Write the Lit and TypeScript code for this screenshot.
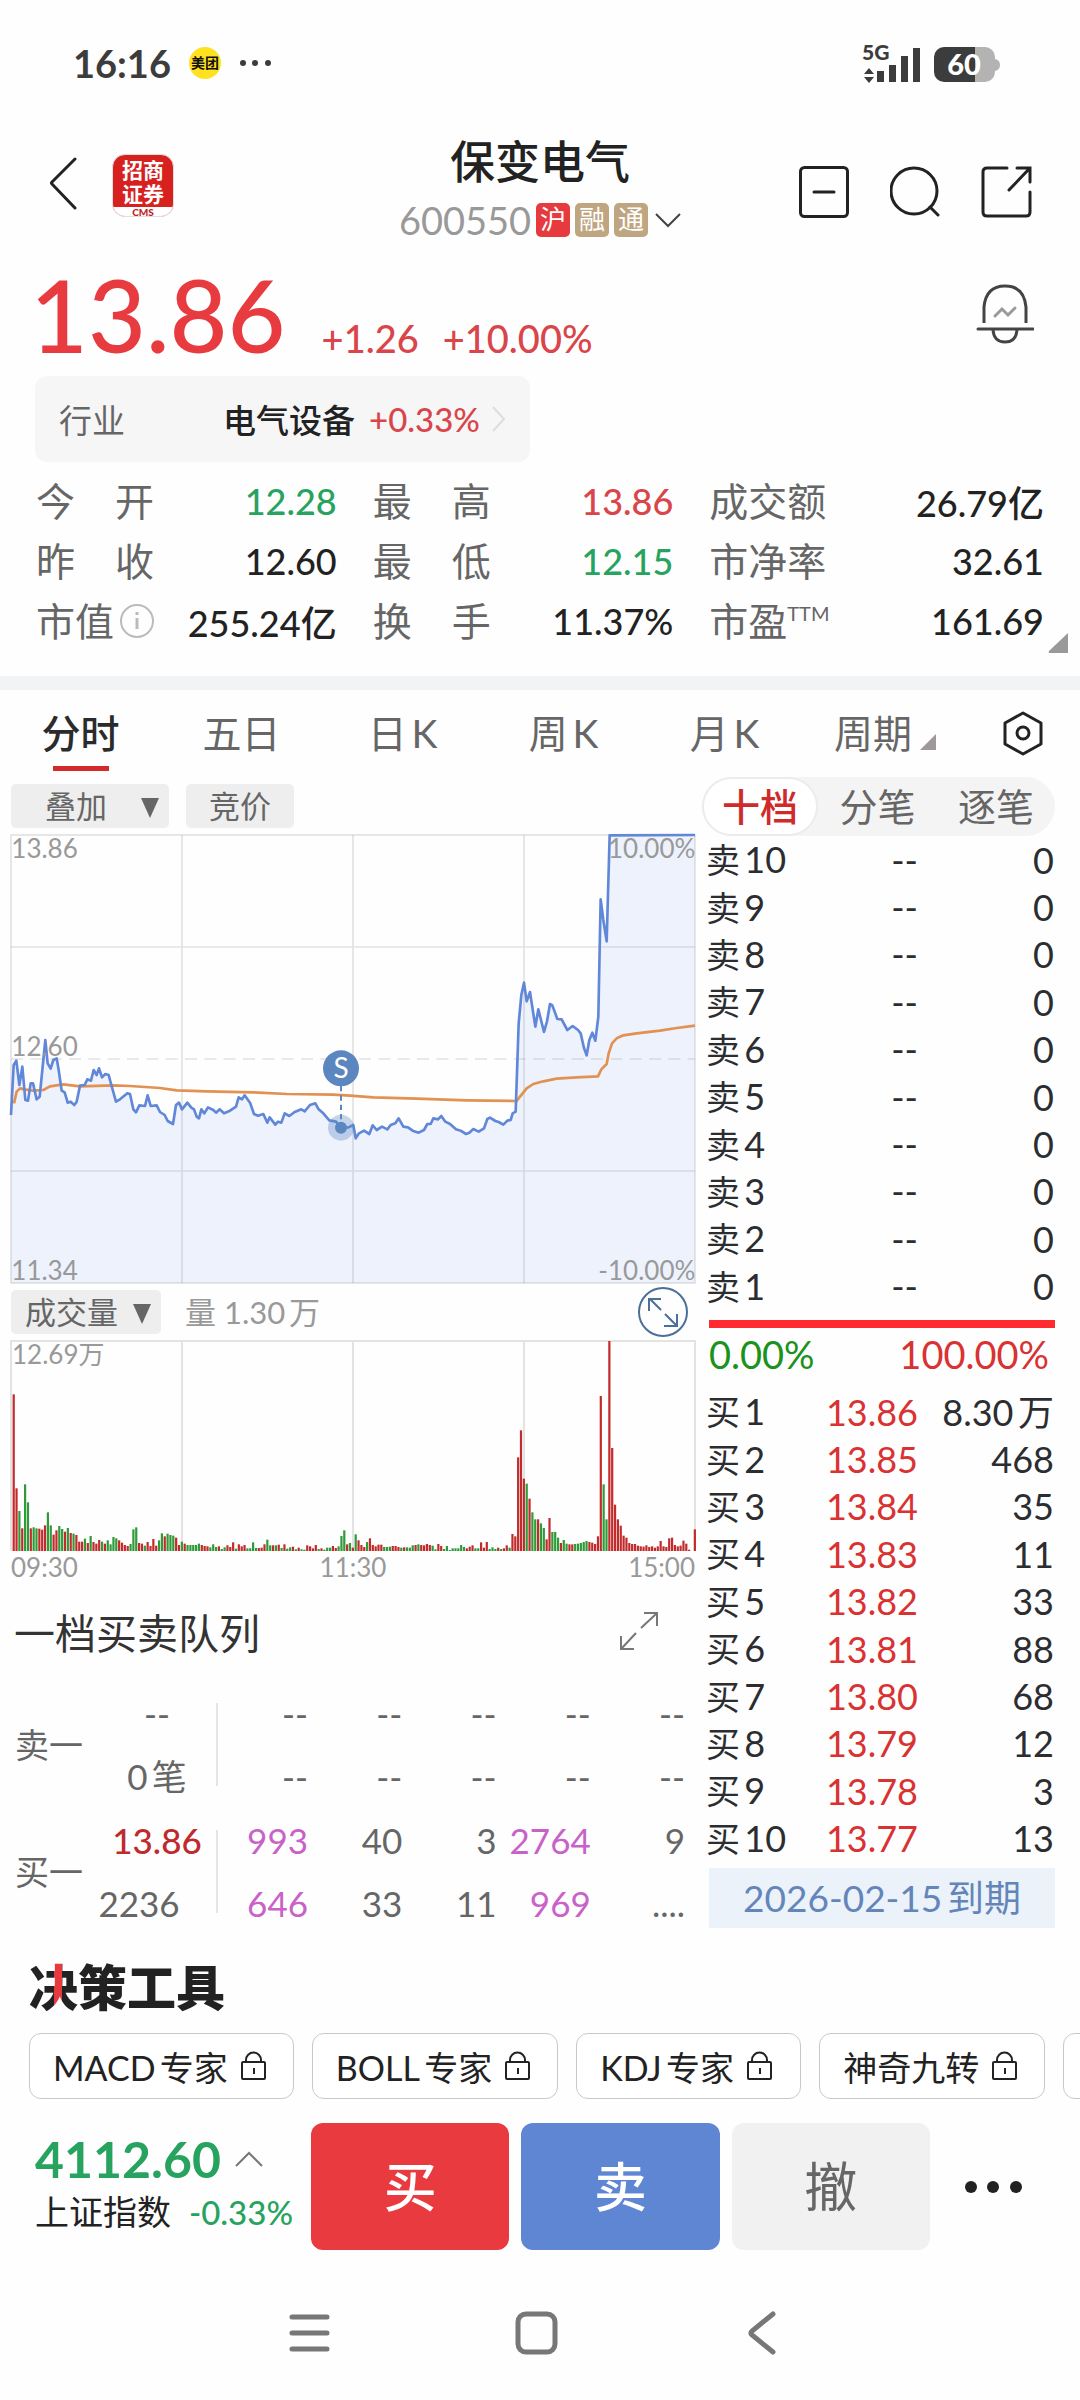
import { LitElement, html, svg, css } from "lit";
import { customElement } from "lit/decorators.js";
import { classMap } from "lit/directives/class-map.js";

const base = css`
  :host {
    display: block;
    font-family: Lato, "Noto Sans CJK SC", sans-serif;
    text-autospace: normal;
  }
  * {
    box-sizing: border-box;
  }
  button {
    border: 0;
    padding: 0;
    margin: 0;
    background: none;
    font: inherit;
    color: inherit;
    cursor: pointer;
  }
  svg {
    display: block;
  }
  table {
    width: 100%;
    border-collapse: collapse;
  }
  td,
  th {
    padding: 0;
    font-weight: 400;
  }
`;

const PRICE: number[] = [
  33, 885, 41, 735, 49, 722, 58, 795, 67, 740, 76, 840, 84, 842, 92, 790, 99, 790, 110, 838, 119, 830, 136, 660, 143, 730,
  152, 746, 160, 720, 170, 715, 176, 750, 185, 812, 194, 817, 203, 848, 212, 845, 223, 855, 230, 845, 240, 797, 254, 795,
  262, 778, 273, 782, 281, 750, 290, 765, 297, 745, 306, 772, 316, 762, 326, 765, 334, 795, 348, 845, 360, 838, 382, 820,
  390, 822, 400, 868, 408, 877, 418, 856, 435, 858, 443, 826, 452, 858, 470, 856, 480, 876, 494, 885, 503, 903, 519, 912,
  528, 855, 537, 848, 546, 868, 562, 848, 574, 863, 582, 868, 590, 890, 597, 895, 604, 868, 613, 880, 624, 862, 640, 870,
  648, 878, 659, 868, 672, 880, 690, 872, 708, 860, 716, 832, 726, 838, 734, 826, 750, 848, 762, 882, 774, 887, 790, 882,
  802, 908, 809, 892, 826, 914, 834, 905, 844, 908, 854, 880, 868, 888, 884, 876, 904, 868, 914, 874, 930, 855, 946, 850,
  956, 868, 968, 878, 988, 901, 1008, 905, 1023, 923, 1045, 922, 1060, 915, 1067, 955, 1077, 940, 1092, 932, 1108, 942,
  1118, 916, 1130, 930, 1146, 920, 1162, 928, 1172, 915, 1186, 910, 1196, 895, 1210, 920, 1224, 922, 1238, 932, 1256, 938,
  1272, 930, 1282, 912, 1292, 912, 1300, 895, 1314, 898, 1324, 888, 1336, 905, 1350, 912, 1368, 928, 1382, 932, 1398, 942,
  1408, 938, 1420, 927, 1436, 935, 1452, 925, 1462, 897, 1470, 893, 1486, 903, 1496, 906, 1510, 914, 1522, 902, 1532, 900,
  1538, 880, 1547, 875, 1556, 610, 1564, 525, 1572, 488, 1580, 544, 1590, 516, 1606, 620, 1615, 568, 1632, 636, 1641, 604,
  1650, 552, 1657, 556, 1672, 597, 1685, 598, 1702, 630, 1718, 618, 1734, 630, 1742, 640, 1752, 684, 1760, 706, 1768, 660,
  1777, 638, 1786, 662, 1795, 590, 1802, 238, 1810, 300, 1820, 364, 1829, 46, 2085, 45,
];

const AVERAGE: number[] = [
  42, 850, 50, 815, 60, 805, 72, 808, 100, 812, 130, 810, 150, 799, 190, 793, 240, 799, 340, 796, 390, 798, 480, 804, 530,
  811, 620, 814, 760, 817, 860, 822, 1000, 824, 1050, 827, 1120, 832, 1250, 836, 1400, 841, 1550, 843, 1560, 830, 1580, 805,
  1600, 792, 1630, 784, 1670, 776, 1730, 772, 1794, 769, 1804, 748, 1820, 732, 1826, 700, 1836, 670, 1850, 655, 1870, 646,
  1910, 640, 1980, 632, 2030, 624, 2085, 617,
];

/* Minute volumes: positive for a rising minute, negative for a falling one; the peak is 630. */
const VOLUME: number[] = [
  470, 188, -120, 68, -200, -146, 68, -71, -68, 67, 64, 77, -116, -77, 49, 62, -75, -66, 58, -69, 54, -52, 48, 28, 28, -37,
  24, -45, 27, 22, 33, -28, 22, -32, -20, -42, -38, 32, 25, 18, 15, -21, -65, -71, 24, 22, -16, 27, 15, 36, 16, -32, -53,
  44, -52, -48, -46, 40, 18, -28, 22, -18, -18, -18, -18, -22, 18, 15, 14, -11, -20, -12, 14, -6, -11, 17, 12, 26, -7, 20,
  14, 18, -8, -8, -26, -9, 9, 10, 20, -34, -17, 17, -17, 19, -9, 20, -7, -11, 13, -5, 10, -5, -4, 17, 14, 8, 18, -6, 8, -4,
  -10, -10, 15, 9, -14, -45, -62, 20, -24, 10, -50, 32, 18, 12, -27, 38, 18, 14, 19, 19, -12, -12, -13, 15, 15, 12, -10,
  11, -11, -10, -17, 18, -20, 18, 17, 21, 18, -16, -5, 21, 15, -6, -15, -3, -8, -8, -8, -18, -12, 8, 13, 17, -8, -8, 26,
  10, 27, -6, -11, -6, 10, -6, 8, 17, -10, 51, 44, 281, 362, 217, -202, 157, -116, -95, 95, -83, -69, 35, 99, -57, -57,
  -40, 24, -33, -22, 20, 20, -21, -22, -24, -27, -30, 27, 25, 21, 44, 465, -200, -95, 630, 309, 139, 95, 76, 46, 40, 24,
  21, 21, 16, 14, 13, 17, 12, 14, 10, 14, 30, 14, 12, 38, 40, 18, 14, 16, 31, 22, 4, 0, 65,
];

@customElement("price-chart")
class PriceChart extends LitElement {
  static styles = [
    base,
    css`
      svg {
        width: 100%;
        height: auto;
        overflow: visible;
      }
      .grid {
        fill: none;
        stroke: #8c8c8c;
        stroke-opacity: 0.24;
        stroke-width: 5;
      }
      .area {
        fill: #edf2fd;
      }
      .price {
        fill: none;
        stroke: #6188d8;
        stroke-width: 8;
        stroke-linejoin: round;
      }
      .average {
        fill: none;
        stroke: #e29150;
        stroke-width: 8;
        stroke-linejoin: round;
      }
      .label {
        font-size: 78px;
        fill: #999;
      }
      .end {
        text-anchor: end;
      }
      .badge {
        fill: #5c86c0;
      }
      .halo {
        fill: #5c86c0;
        opacity: 0.35;
      }
      .stem {
        stroke: #5c86c0;
        stroke-width: 6;
        stroke-dasharray: 16 12;
      }
      .mark {
        font-size: 84px;
        fill: #fff;
        text-anchor: middle;
      }
    `,
  ];

  render() {
    const line = PRICE.join(" ");
    return html`
      <svg viewBox="33 45 2052 1344" role="img" aria-label="分时走势">
        <polygon class="area" points="33 1389 ${line} 2085 1389"></polygon>
        <rect class="grid" x="33" y="45" width="2052" height="1344"></rect>
        <path class="grid" d="M33 381H2085M33 1053H2085M546 45V1389M1059 45V1389M1572 45V1389"></path>
        <path class="grid" stroke-dasharray="36 22" d="M33 717H2085"></path>
        <polyline class="average" points=${AVERAGE.join(" ")}></polyline>
        <polyline class="price" points=${line}></polyline>
        <text class="label" x="34" y="114">13.86</text>
        <text class="label" x="34" y="708">12.60</text>
        <text class="label" x="34" y="1380">11.34</text>
        <text class="label end" x="2086" y="114">10.00%</text>
        <text class="label end" x="2086" y="1380">-10.00%</text>
        <circle class="halo" cx="1023" cy="923" r="39"></circle>
        <circle class="badge" cx="1023" cy="923" r="18"></circle>
        <path class="stem" d="M1023 798V905"></path>
        <circle class="badge" cx="1023" cy="745" r="54"></circle>
        <text class="mark" x="1023" y="775">S</text>
      </svg>
    `;
  }
}

@customElement("volume-chart")
class VolumeChart extends LitElement {
  static styles = [
    base,
    css`
      svg {
        width: 100%;
        height: auto;
        overflow: visible;
      }
      .grid {
        fill: none;
        stroke: #e3e3e3;
        stroke-width: 2;
      }
      .up {
        fill: #c22b2b;
      }
      .down {
        fill: #2f9a38;
      }
      .label {
        font-size: 26px;
        fill: #999;
        text-autospace: no-autospace;
      }
      .times {
        display: flex;
        justify-content: space-between;
        height: 32px;
        line-height: 32px;
        font-size: 26px;
        color: #999;
      }
    `,
  ];

  render() {
    return html`
      <svg viewBox="0 0 684 210" role="img" aria-label="成交量">
        <path class="grid" d="M0 210V0H684V210M171 0V210M342 0V210M513 0V210"></path>
        ${VOLUME.map((v, i) => {
          const h = Math.abs(v) / 3;
          return svg`<rect class=${v > 0 ? "up" : "down"} x=${1.6 + i * 2.85} y=${210 - h} width="2.2" height=${h}></rect>`;
        })}
        <text class="label" x="1" y="23">12.69万</text>
      </svg>
      <div class="times"><span>09:30</span><span>11:30</span><span>15:00</span></div>
    `;
  }
}

const BUYS: [string, string][] = [
  ["13.86", "8.30万"],
  ["13.85", "468"],
  ["13.84", "35"],
  ["13.83", "11"],
  ["13.82", "33"],
  ["13.81", "88"],
  ["13.80", "68"],
  ["13.79", "12"],
  ["13.78", "3"],
  ["13.77", "13"],
];

@customElement("order-book")
class OrderBook extends LitElement {
  static styles = [
    base,
    css`
      .seg {
        display: grid;
        grid-template-columns: 116fr 119fr 118fr;
        height: 59px;
        border-radius: 30px;
        background: #f4f4f4;
        font-size: 38px;
        line-height: 55px;
        color: #666;
      }
      .on {
        border: 2px solid #ececec;
        border-radius: 30px;
        background: #fff;
        color: #d02b2b;
        font-weight: 500;
      }
      .seg button {
        text-align: center;
      }
      .body {
        padding-left: 4px;
      }
      table {
        height: 474px;
        font-size: 36px;
        line-height: 40px;
        color: #2b2d31;
        table-layout: fixed;
      }
      th {
        width: 82px;
        text-align: left;
        white-space: nowrap;
      }
      .cjk {
        font-size: 34px;
      }
      td {
        text-align: right;
        white-space: nowrap;
      }
      .qty {
        width: 137px;
        padding-right: 1px;
      }
      .red {
        color: #d93232;
      }
      .ratio {
        height: 8px;
        margin: 10px 0 0 3px;
        background: #ff2b2f;
      }
      .share {
        display: flex;
        justify-content: space-between;
        padding: 0 6px 0 3px;
        height: 60px;
        line-height: 52px;
        font-size: 38px;
      }
      .green {
        color: #1a921c;
      }
      .expiry {
        height: 60px;
        line-height: 60px;
        margin: 6px 0 0 3px;
        background: #ecf2f9;
        color: #6385b9;
        text-align: center;
        font-size: 37px;
      }
    `,
  ];

  render() {
    const sells = [10, 9, 8, 7, 6, 5, 4, 3, 2, 1];
    return html`
      <div class="seg">
        <button class="on">十档</button>
        <button>分笔</button>
        <button>逐笔</button>
      </div>
      <div class="body">
        <table aria-label="卖盘">
          <tbody>
            ${sells.map(
              (n) => html`<tr>
                <th scope="row"><span class="cjk">卖</span>${n}</th>
                <td>--</td>
                <td class="qty">0</td>
              </tr>`,
            )}
          </tbody>
        </table>
        <div class="ratio"></div>
        <div class="share"><span class="green">0.00%</span><span class="red">100.00%</span></div>
        <table aria-label="买盘">
          <tbody>
            ${BUYS.map(
              ([price, qty], i) => html`<tr>
                <th scope="row"><span class="cjk">买</span>${i + 1}</th>
                <td class="red">${price}</td>
                <td class="qty">${qty}</td>
              </tr>`,
            )}
          </tbody>
        </table>
        <div class="expiry">2026-02-15到期</div>
      </div>
    `;
  }
}

type Cell = { text: string; big?: boolean };
const plain = (...texts: string[]): Cell[] => texts.map((text) => ({ text }));
const big = (text: string): Cell => ({ text, big: true });

@customElement("app-root")
class AppRoot extends LitElement {
  static styles = [
    base,
    css`
      :host {
        background: #fefefe;
        color: #222;
        min-height: 100vh;
      }
      .status {
        display: flex;
        align-items: center;
        height: 126px;
        padding: 0 79px 0 73px;
        color: #3c3c3c;
      }
      .clock {
        font-size: 38px;
        font-weight: 700;
        margin-right: 18px;
      }
      .meituan {
        width: 32px;
        height: 32px;
        border-radius: 50%;
        background: #ffe11f;
        color: #111;
        font-size: 14px;
        font-weight: 700;
        line-height: 31px;
        text-align: center;
        margin-right: 18px;
      }
      .radio {
        margin-left: auto;
      }
      .net {
        font-size: 21px;
        font-weight: 900;
        fill: #3c3c3c;
      }
      .charge {
        font-size: 29px;
        font-weight: 900;
        fill: #fff;
        text-anchor: middle;
      }
      .header {
        display: grid;
        grid-template-columns: 1fr auto 1fr;
        align-items: center;
        padding: 11px 48px 0 48px;
      }
      .left {
        display: flex;
        align-items: center;
        gap: 34px;
        padding-bottom: 4px;
      }
      .logo {
        width: 62px;
        height: 63px;
        border-radius: 13px;
        background: #d7211f;
        border: 1px solid #e4dede;
        overflow: hidden;
        text-align: center;
        color: #fff;
        font-size: 21px;
        font-weight: 700;
        line-height: 24px;
        padding-top: 3px;
      }
      .cms {
        margin-top: 1px;
        background: #fff;
        color: #c3201f;
        font-size: 10px;
        font-weight: 900;
        line-height: 11px;
      }
      h1 {
        margin: 0;
        font-size: 45px;
        line-height: 50px;
        font-weight: 500;
        text-align: center;
      }
      .code {
        display: flex;
        align-items: center;
        gap: 5px;
        margin-top: 16px;
        height: 34px;
        font-size: 38px;
        color: #999;
      }
      .tag {
        width: 34px;
        height: 34px;
        line-height: 33px;
        border-radius: 5px;
        background: #bfa580;
        color: #fff;
        font-size: 26px;
        text-align: center;
      }
      .sh {
        background: #e73a3f;
      }
      .actions {
        display: flex;
        justify-content: flex-end;
        gap: 41px;
        padding-top: 10px;
      }
      .quote {
        display: flex;
        align-items: center;
        justify-content: space-between;
        height: 139px;
        padding: 15px 46px 0 30px;
      }
      .figures {
        display: flex;
        align-items: baseline;
        color: #e83b40;
      }
      .last {
        font-size: 100px;
        line-height: 120px;
        font-weight: 500;
        margin-right: 36px;
      }
      .delta {
        font-size: 38px;
        font-weight: 500;
        margin-right: 24px;
        color: #d9454a;
      }
      .industry {
        display: inline-flex;
        align-items: center;
        height: 86px;
        margin-left: 35px;
        padding: 0 24px;
        border-radius: 12px;
        background: #f6f6f6;
        font-size: 33px;
      }
      .dim {
        color: #666;
      }
      .sector {
        margin-left: 98px;
        font-weight: 500;
      }
      .pct {
        margin: 0 12px 0 14px;
        color: #d9454a;
        font-weight: 500;
        font-size: 33px;
      }
      .stats {
        display: grid;
        grid-template-columns: 300fr 300fr 334fr;
        column-gap: 36px;
        margin: 0;
        padding: 9px 36px 25px;
        position: relative;
      }
      .stat {
        display: flex;
        align-items: center;
        height: 60px;
      }
      dt {
        display: flex;
        justify-content: space-between;
        width: 118px;
        font-size: 39px;
        line-height: 60px;
        color: #666;
        white-space: nowrap;
      }
      sup {
        font-size: 20px;
        line-height: 44px;
        margin-right: auto;
        vertical-align: baseline;
      }
      .info {
        margin-left: 4px;
      }
      dt .info {
        flex: none;
      }
      dd {
        margin: 0 0 0 auto;
        font-size: 36px;
        font-weight: 500;
        white-space: nowrap;
        text-autospace: no-autospace;
      }
      .up {
        color: #d9454a;
      }
      .down {
        color: #27a35f;
      }
      .more-stats {
        position: absolute;
        right: 12px;
        bottom: 23px;
      }
      .band {
        height: 14px;
        background: #f2f3f5;
      }
      .tabs {
        display: grid;
        grid-template-columns: repeat(5, 161fr) 160fr 115fr;
        height: 87px;
        font-size: 39px;
        color: #666;
      }
      .tab {
        display: flex;
        flex-direction: column;
        align-items: center;
        justify-content: flex-end;
        gap: 8px;
        line-height: 50px;
        padding-bottom: 6px;
      }
      .tab::after {
        content: "";
        width: 56px;
        height: 5px;
      }
      .active {
        color: #2b2b2b;
        font-weight: 500;
      }
      .active::after {
        background: #d42a2c;
      }
      .period {
        display: flex;
        align-items: flex-end;
        gap: 8px;
      }
      .period svg {
        margin-bottom: 8px;
      }
      .main {
        display: grid;
        grid-template-columns: 684fr 353fr;
        column-gap: 7px;
        padding: 0 25px 0 11px;
      }
      .tools {
        display: flex;
        align-items: center;
        gap: 17px;
        height: 58px;
        font-size: 31px;
        color: #666;
      }
      .pill {
        display: flex;
        align-items: center;
        gap: 15px;
        height: 44px;
        line-height: 42px;
        padding: 0 10px 0 14px;
        border-radius: 5px;
        background: #eee;
      }
      .overlay {
        gap: 34px;
        padding-left: 34px;
      }
      .auction {
        padding: 0 23px;
      }
      .vol {
        color: #999;
        margin-left: 7px;
        line-height: 42px;
      }
      .expand {
        margin: 0 7px 0 auto;
      }
      .queue-head {
        display: flex;
        justify-content: space-between;
        align-items: center;
        height: 98px;
        padding: 0 37px 2px 3px;
      }
      h2 {
        margin: 0;
        font-weight: 400;
        font-size: 41px;
        color: #333;
      }
      .queue {
        height: 254px;
        font-size: 35px;
        line-height: 40px;
        color: #666;
        table-layout: fixed;
      }
      .queue tr {
        height: 63px;
      }
      .queue th {
        width: 73px;
        padding-left: 4px;
        text-align: left;
        font-size: 34px;
        white-space: nowrap;
      }
      .queue td {
        text-align: right;
      }
      .queue .sum {
        width: 132px;
        padding-left: 14px;
        text-align: center;
      }
      .queue .lots {
        padding: 0 22px 0 0;
      }
      .rule {
        width: 8px;
      }
      .rule::before {
        content: "";
        display: block;
        width: 2px;
        height: 83px;
        background: #e4e4e4;
      }
      .queue .first {
        width: 84px;
      }
      .queue .red {
        color: #be2a2e;
        font-weight: 500;
      }
      .queue .big {
        color: #c962c8;
      }
      .gap {
        width: 10px;
      }
      .decide {
        padding: 25px 0 24px 29px;
      }
      .decide h2 {
        font-size: 49px;
        line-height: 54px;
        font-weight: 900;
        color: #222;
      }
      .accent {
        color: transparent;
        background: linear-gradient(90deg, #222 0 52%, #e63a3f 52% 67%, #222 67%);
        -webkit-background-clip: text;
        background-clip: text;
      }
      .chips {
        display: flex;
        gap: 18px;
        margin-top: 19px;
        overflow: hidden;
      }
      .chip {
        flex: none;
        display: flex;
        align-items: center;
        gap: 12px;
        height: 66px;
        min-width: 225px;
        padding: 0 26px 0 23px;
        border: 1px solid #c8c8c8;
        border-radius: 12px;
        background: #fff;
        font-size: 34px;
      }
      .trade {
        display: grid;
        grid-template-columns: 264px 1fr 1fr 1fr 102px;
        gap: 12px;
        padding: 0 36px 0 35px;
        height: 127px;
      }
      .index {
        text-align: left;
        white-space: nowrap;
        padding-bottom: 12px;
      }
      .points {
        display: flex;
        align-items: center;
        gap: 14px;
        font-size: 50px;
        line-height: 62px;
        font-weight: 700;
        color: #27a35f;
      }
      .name {
        display: flex;
        justify-content: space-between;
        font-size: 34px;
        line-height: 44px;
        padding-right: 6px;
      }
      .name .down {
        font-weight: 500;
        font-size: 33px;
      }
      .deal {
        border-radius: 12px;
        color: #fff;
        font-size: 53px;
        font-weight: 500;
        padding-bottom: 5px;
      }
      .buy {
        background: #e83a3f;
      }
      .sell {
        background: #5e86d3;
      }
      .cancel {
        background: #f1f1f1;
        color: #666;
        font-weight: 400;
      }
      .more {
        display: flex;
        align-items: center;
        justify-content: center;
      }
      .nav {
        display: flex;
        justify-content: center;
        gap: 183px;
        padding: 58px 9px 58px 0;
      }
    `,
  ];

  private down = html`<svg width="18" height="24" viewBox="0 0 18 24"><path d="M0 4H18L9 24Z" fill="#666" /></svg>`;

  private queueRow(cells: Cell[]) {
    return cells.map(
      (c, i) => html`<td class=${classMap({ first: i === 0, big: !!c.big })}>${c.text}</td>`,
    );
  }

  private stat(label: unknown, value: string, tone = "") {
    return html`<div class="stat"><dt>${label}</dt><dd class=${tone}>${value}</dd></div>`;
  }

  private chip(name: string) {
    return html`<button class="chip">
      ${name}
      <svg width="27" height="30" viewBox="0 0 27 30" fill="none" stroke="#222" stroke-width="2">
        <rect x="2" y="11" width="23" height="17" rx="1"></rect>
        <path d="M6 11V9a7 7 0 0 1 15 0V11M14 17V23"></path>
      </svg>
    </button>`;
  }

  render() {
    const two = (a: string, b: string) => html`<span>${a}</span><span>${b}</span>`;
    return html`
      <div class="status">
        <span class="clock">16:16</span>
        <span class="meituan">美团</span>
        <svg width="34" height="8" viewBox="0 0 34 8" fill="#3c3c3c">
          <circle cx="4" cy="4" r="3"></circle><circle cx="16" cy="4" r="3"></circle><circle cx="29" cy="4" r="3"></circle>
        </svg>
        <svg class="radio" width="140" height="58" viewBox="0 -8 140 58" fill="#3c3c3c">
          <text class="net" x="1" y="18">5G</text>
          <path d="M8 26L13 32H3ZM3 35H13L8 41ZM16 29h7v11h-7zM28 23h7v17h-7zM40 14h7v26h-7zM52 6h7v34h-7z"></path>
          <path fill="#b3b3b3" d="M114 5H124a10 10 0 0 1 10 10V17q5 1 5 6t-5 6V30a10 10 0 0 1-10 10H114Z"></path>
          <path d="M114 5H83A10 10 0 0 0 73 15V30A10 10 0 0 0 83 40H114Z"></path>
          <text class="charge" x="103" y="33">60</text>
        </svg>
      </div>

      <header class="header">
        <div class="left">
          <button aria-label="返回">
            <svg width="30" height="56" viewBox="0 0 30 56" fill="none" stroke="#222" stroke-width="3">
              <path d="M27 2L4 25q-1 1 0 2L27 51" stroke-linecap="round"></path>
            </svg>
          </button>
          <div class="logo">招商<br />证券<div class="cms">CMS</div></div>
        </div>
        <div>
          <h1>保变电气</h1>
          <div class="code">
            <span>600550</span>
            <span class="tag sh">沪</span><span class="tag">融</span><span class="tag">通</span>
            <svg width="28" height="20" viewBox="0 0 28 20" fill="none" stroke="#444" stroke-width="2">
              <path d="M3 4L15 16L27 4"></path>
            </svg>
          </div>
        </div>
        <div class="actions">
          <button aria-label="移出自选">
            <svg width="50" height="52" viewBox="0 0 50 52" fill="none" stroke="#222" stroke-width="3" stroke-linecap="round">
              <rect x="1.500" y="1.500" width="47" height="49" rx="4"></rect>
              <path d="M15 26H35"></path>
            </svg>
          </button>
          <button aria-label="搜索">
            <svg width="50" height="52" viewBox="0 0 50 52" fill="none" stroke="#222" stroke-width="3" stroke-linecap="round">
              <circle cx="24" cy="25" r="23"></circle>
              <path d="M40 41L48 49"></path>
            </svg>
          </button>
          <button aria-label="分享">
            <svg width="51" height="52" viewBox="0 0 51 52" fill="none" stroke="#222" stroke-width="3" stroke-linecap="round">
              <path d="M26 2H6Q2 2 2 6V46Q2 50 6 50H45Q49 50 49 46V26M36 2H49V16M48 3L28 24"></path>
            </svg>
          </button>
        </div>
      </header>

      <section class="quote">
        <div class="figures">
          <span class="last">13.86</span><span class="delta">+1.26</span><span class="delta">+10.00%</span>
        </div>
        <button aria-label="预警">
          <svg width="58" height="60" viewBox="0 0 58 60" fill="none" stroke="#444" stroke-width="3" stroke-linecap="round">
            <path d="M8 39V23Q10 2 29 2T50 23V39" stroke-linecap="butt"></path>
            <path d="M2 45H57M17 46Q18 58 29 58T41 46"></path>
            <path stroke="#999" d="M19 32L26 25L32 31L39 24"></path>
          </svg>
        </button>
      </section>

      <button class="industry">
        <span class="dim">行业</span><span class="sector">电气设备</span><span class="pct">+0.33%</span>
        <svg width="14" height="26" viewBox="0 0 14 26" fill="none" stroke="#ddd" stroke-width="2"><path d="M1 1L12 13L1 25" /></svg>
      </button>

      <dl class="stats">
        ${this.stat(two("今", "开"), "12.28", "down")}
        ${this.stat(two("最", "高"), "13.86", "up")}
        ${this.stat("成交额", "26.79亿")}
        ${this.stat(two("昨", "收"), "12.60")}
        ${this.stat(two("最", "低"), "12.15", "down")}
        ${this.stat("市净率", "32.61")}
        ${this.stat(
          html`市值<svg class="info" width="38" height="60" viewBox="0 0 38 60" fill="none" stroke="#bbb" stroke-width="2">
              <circle cx="19" cy="30" r="16"></circle><path d="M19 27V38M19 21V24" stroke-width="3"></path>
            </svg>`,
          "255.24亿",
        )}
        ${this.stat(two("换", "手"), "11.37%")}
        ${this.stat(html`市盈<sup>TTM</sup>`, "161.69")}
        <svg class="more-stats" width="20" height="20" viewBox="0 0 20 20"><path d="M20 0V20H2Q0 20 1 18Z" fill="#999" /></svg>
      </dl>
      <div class="band"></div>

      <nav class="tabs">
        <button class="tab active">分时</button>
        <button class="tab">五日</button>
        <button class="tab">日K</button>
        <button class="tab">周K</button>
        <button class="tab">月K</button>
        <button class="tab">
          <span class="period">周期<svg width="16" height="16" viewBox="0 0 16 16"><path d="M16 0V16H0Z" fill="#a09898" /></svg></span>
        </button>
        <button class="tab" aria-label="设置">
          <svg width="42" height="50" viewBox="0 0 42 50" fill="none" stroke="#222" stroke-width="3" stroke-linejoin="round">
            <path d="M21 5L39 15V36L21 46L3 36V15Z"></path><circle cx="21" cy="25" r="6"></circle>
          </svg>
        </button>
      </nav>

      <main class="main">
        <div>
          <div class="tools">
            <button class="pill overlay">叠加${this.down}</button>
            <button class="pill auction">竞价</button>
          </div>
          <price-chart></price-chart>
          <div class="tools">
            <button class="pill">成交量${this.down}</button>
            <span class="vol">量 1.30万</span>
            <button class="expand" aria-label="放大图表">
              <svg width="50" height="50" viewBox="0 0 50 50" fill="none" stroke="#4a6f98" stroke-width="2">
                <circle cx="25" cy="25" r="24"></circle>
                <path d="M23 23L12 12M11 24V12H23M27 27L38 38M39 27V39H26"></path>
              </svg>
            </button>
          </div>
          <volume-chart></volume-chart>

          <div class="queue-head">
            <h2>一档买卖队列</h2>
            <button aria-label="展开队列">
              <svg width="38" height="38" viewBox="0 0 38 38" fill="none" stroke="#777" stroke-width="2">
                <path d="M21 16L36 2M24 1H37V14M16 21L2 36M1 24V37H14"></path>
              </svg>
            </button>
          </div>
          <table class="queue" aria-label="一档买卖队列">
            <tbody>
              <tr>
                <th rowspan="2" scope="rowgroup">卖一</th>
                <td class="sum">--</td>
                <td class="rule" rowspan="2"></td>
                ${this.queueRow(plain("--", "--", "--", "--", "--"))}
                <td class="gap" rowspan="4"></td>
              </tr>
              <tr>
                <td class="sum">0笔</td>
                ${this.queueRow(plain("--", "--", "--", "--", "--"))}
              </tr>
              <tr>
                <th rowspan="2" scope="rowgroup">买一</th>
                <td class="sum red">13.86</td>
                <td class="rule" rowspan="2"></td>
                ${this.queueRow([big("993"), ...plain("40", "3"), big("2764"), ...plain("9")])}
              </tr>
              <tr>
                <td class="sum lots">2236</td>
                ${this.queueRow([big("646"), ...plain("33", "11"), big("969"), ...plain("....")])}
              </tr>
            </tbody>
          </table>
        </div>
        <order-book></order-book>
      </main>

      <section class="decide">
        <h2><span class="accent">决</span>策工具</h2>
        <div class="chips">
          ${["MACD专家", "BOLL专家", "KDJ专家", "神奇九转"].map((n) => this.chip(n))}
          <button class="chip" aria-label="更多工具"></button>
        </div>
      </section>

      <section class="trade">
        <button class="index">
          <span class="points">4112.60
            <svg width="28" height="18" viewBox="0 0 28 18" fill="none" stroke="#777" stroke-width="2"><path d="M1 16L14 3L27 16" /></svg>
          </span>
          <span class="name">上证指数<span class="down">-0.33%</span></span>
        </button>
        <button class="deal buy">买</button>
        <button class="deal sell">卖</button>
        <button class="deal cancel">撤</button>
        <button class="more" aria-label="更多">
          <svg width="60" height="14" viewBox="0 0 60 14" fill="#222">
            <circle cx="8" cy="7" r="6"></circle><circle cx="30" cy="7" r="6"></circle><circle cx="53" cy="7" r="6"></circle>
          </svg>
        </button>
      </section>

      <nav class="nav">
        <button aria-label="最近任务">
          <svg width="42" height="50" viewBox="0 0 42 50" stroke="#777" stroke-width="5" stroke-linecap="round">
            <path d="M3 9H38M3 25H38M3 41H38"></path>
          </svg>
        </button>
        <button aria-label="主屏幕">
          <svg width="44" height="50" viewBox="0 0 44 50" fill="none" stroke="#777" stroke-width="5">
            <rect x="4" y="6" width="37" height="38" rx="8"></rect>
          </svg>
        </button>
        <button aria-label="返回上级">
          <svg width="42" height="50" viewBox="0 0 42 50" fill="none" stroke="#777" stroke-width="5" stroke-linecap="round">
            <path d="M32 6L11 23q-2 2 0 4L32 44"></path>
          </svg>
        </button>
      </nav>
    `;
  }
}
